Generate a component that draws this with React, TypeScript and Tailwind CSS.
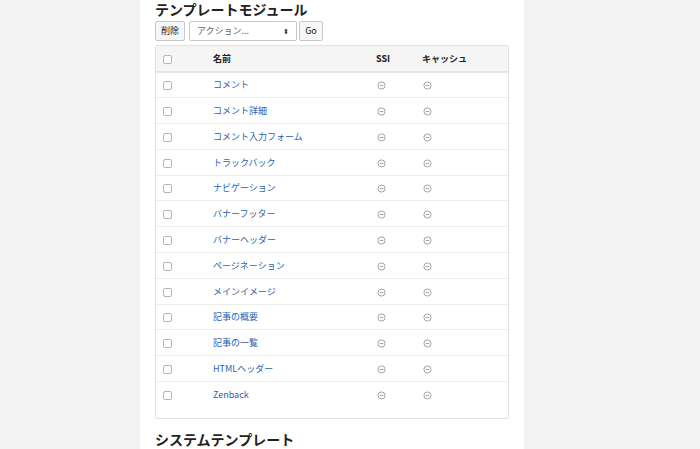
import React from 'react';

const modules = [
  'コメント',
  'コメント詳細',
  'コメント入力フォーム',
  'トラックバック',
  'ナビゲーション',
  'バナーフッター',
  'バナーヘッダー',
  'ページネーション',
  'メインイメージ',
  '記事の概要',
  '記事の一覧',
  'HTMLヘッダー',
  'Zenback',
];

function MinusCircle() {
  return (
    <svg width="9" height="9" viewBox="0 0 10 10" className="inline-block">
      <circle cx="5" cy="5" r="4" fill="none" stroke="#9a9a9a" strokeWidth="1" />
      <line x1="3" y1="5" x2="7" y2="5" stroke="#9a9a9a" strokeWidth="1" />
    </svg>
  );
}

function Checkbox() {
  return (
    <span className="inline-block h-[9px] w-[9px] rounded-[2px] border border-[#b5b5b5] bg-white align-middle" />
  );
}

export default function App() {
  return (
    <div
      className="flex min-h-[449px] w-[700px] justify-center bg-[#f3f3f3] text-[#222]"
      style={{ fontFamily: '"Noto Sans CJK JP", "Liberation Sans", sans-serif' }}
    >
      <div className="ml-[-36px] w-[384px] bg-white pl-[15px] pr-[15px]">
        <h2 className="text-[14px] leading-[18px] font-bold">テンプレートモジュール</h2>
        <div className="mt-[3px] flex h-[20px] items-stretch text-[9px]">
          <button className="w-[30px] rounded-[2px] border border-[#c8c8c8] bg-[#f7f7f7]">削除</button>
          <div className="ml-[4px] flex w-[108px] items-center justify-between rounded-[2px] border border-[#c8c8c8] bg-white px-[7px] text-[#666]">
            <span>アクション...</span>
            <span className="text-[7px] leading-none text-[#333]">⬍</span>
          </div>
          <button className="ml-[2px] w-[24px] rounded-[2px] border border-[#c8c8c8] bg-[#f7f7f7]">Go</button>
        </div>
        <div className="mt-[4px] h-[374px] rounded-[2px] border border-[#e2e2e2] bg-white">
          <table className="w-full border-collapse text-[9px]">
            <thead>
              <tr className="h-[26px] border-b-2 border-[#e6e6e6] bg-[#f5f5f5] text-left font-bold">
                <th className="w-[57px] pl-[7px]"><Checkbox /></th>
                <th className="w-[163px]">名前</th>
                <th className="w-[46px]">SSI</th>
                <th>キャッシュ</th>
              </tr>
            </thead>
            <tbody>
              {modules.map((name, i) => (
                <tr key={name} className={`h-[25.8px] ${i < modules.length - 1 ? 'border-b border-[#ececec]' : ''}`}>
                  <td className="pl-[7px]"><Checkbox /></td>
                  <td><a className="text-[#2c5fb1]">{name}</a></td>
                  <td className="pl-[1px]"><MinusCircle /></td>
                  <td className="pl-[1px]"><MinusCircle /></td>
                </tr>
              ))}
            </tbody>
          </table>
        </div>
        <h2 className="mt-[10px] text-[14px] leading-[20px] font-bold">システムテンプレート</h2>
      </div>
    </div>
  );
}
